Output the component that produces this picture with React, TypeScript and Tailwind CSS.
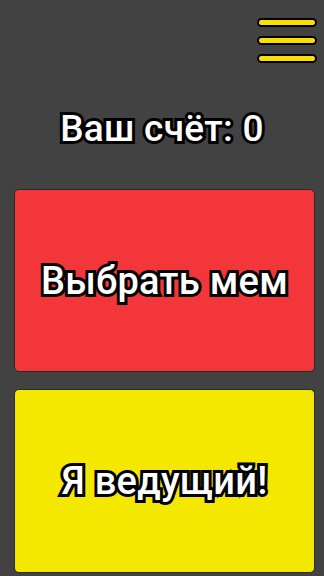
import React from 'react';

const outlined =
  "font-['Roboto',sans-serif] font-medium text-white [-webkit-text-stroke:6px_#000] [paint-order:stroke_fill] leading-none";

export default function App() {
  return (
    <div className="w-full h-[576px] bg-[#424242] flex flex-col overflow-hidden">
      {/* Menu */}
      <div className="flex justify-end pt-[18px] pr-[7px]">
        <button className="flex flex-col gap-[9px] w-[60px]">
          <span className="block h-[9px] rounded-full bg-[#f9e000] border-2 border-black" />
          <span className="block h-[9px] rounded-full bg-[#f9e000] border-2 border-black" />
          <span className="block h-[9px] rounded-full bg-[#f9e000] border-2 border-black" />
        </button>
      </div>

      {/* Score */}
      <div className="h-[126px] flex items-center justify-center pt-[4px]">
        <span className={`${outlined} text-[37px] tracking-[0.3px]`}>Ваш счёт: 0</span>
      </div>

      {/* Actions */}
      <div className="flex flex-col gap-[17px] ml-[14px] mr-[9px]">
        <button className="h-[183px] rounded-[5px] bg-[#f3363a] border border-[#2a2a2a] flex items-center justify-center">
          <span className={`${outlined} text-[38px] tracking-[0.3px]`}>Выбрать мем</span>
        </button>
        <button className="h-[184px] rounded-[5px] bg-[#f5e800] border border-[#2a2a2a] flex items-center justify-center">
          <span className={`${outlined} text-[38px] tracking-[0.3px]`}>Я ведущий!</span>
        </button>
      </div>
    </div>
  );
}
